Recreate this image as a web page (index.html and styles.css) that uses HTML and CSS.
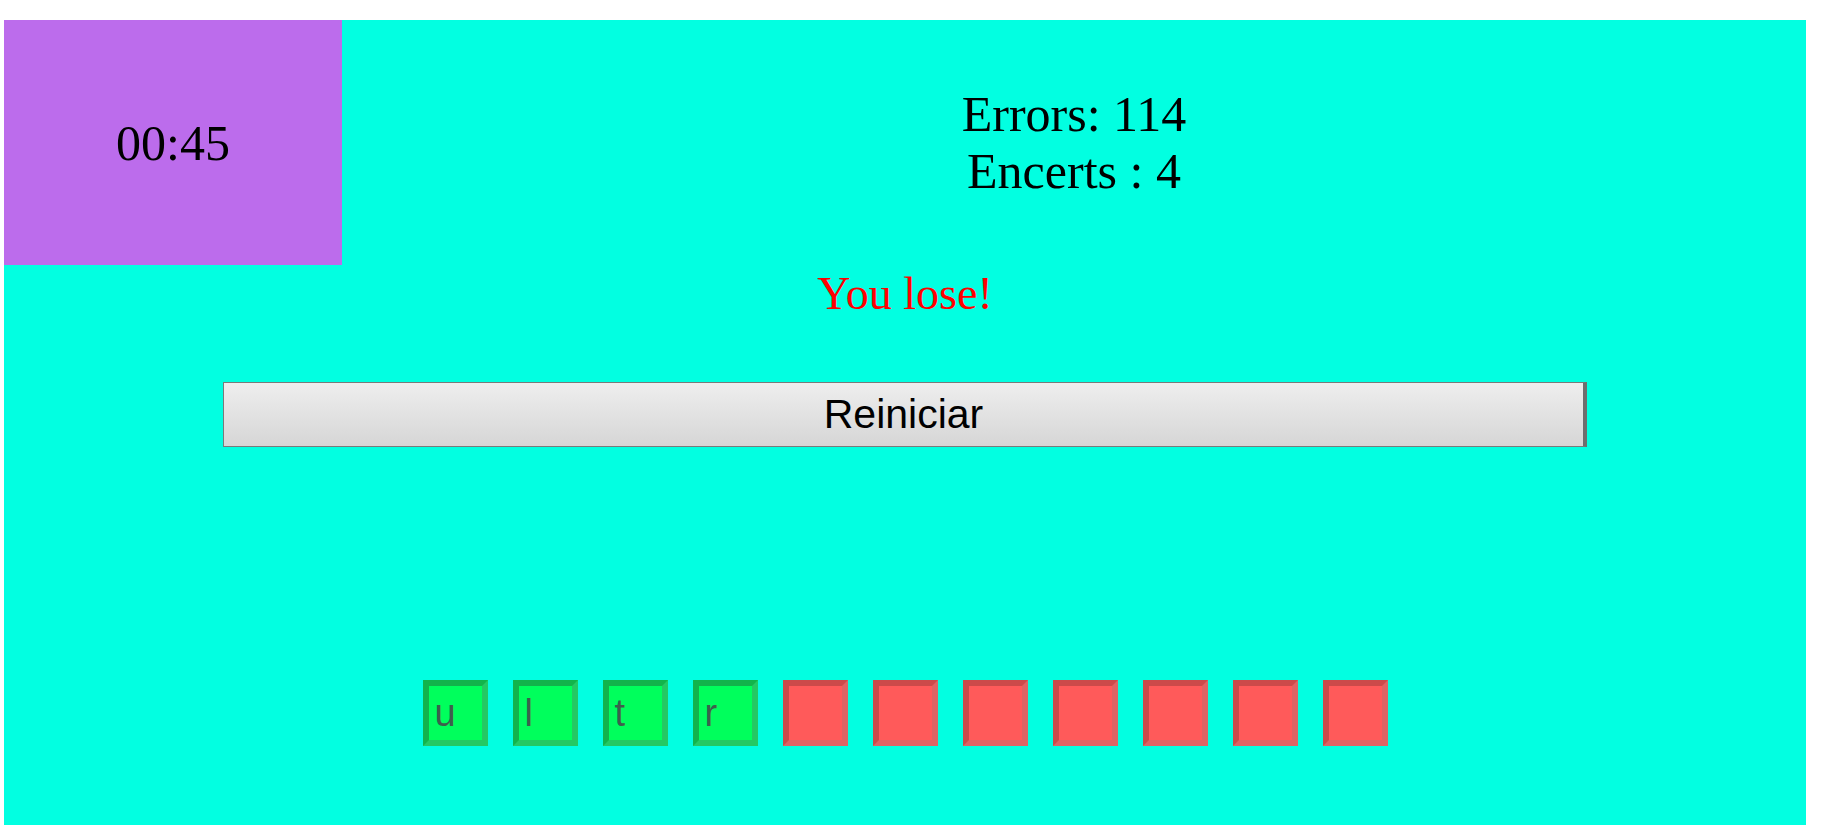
FILE: index.html
```html
<!DOCTYPE html>
<html lang="ca">
<head>
<meta charset="utf-8">
<title>Penjat</title>
<link rel="stylesheet" href="styles.css">
</head>
<body>
<div class="game">
  <div class="top">
    <div class="timer">00:45</div>
    <div class="score">
      <div>Errors: 114</div>
      <div>Encerts : 4</div>
    </div>
  </div>
  <div class="message">You lose!</div>
  <div class="actions">
    <button class="restart">Reiniciar</button>
  </div>
  <div class="word">
    <div class="tile hit">u</div>
    <div class="tile hit">l</div>
    <div class="tile hit">t</div>
    <div class="tile hit">r</div>
    <div class="tile miss"></div>
    <div class="tile miss"></div>
    <div class="tile miss"></div>
    <div class="tile miss"></div>
    <div class="tile miss"></div>
    <div class="tile miss"></div>
    <div class="tile miss"></div>
  </div>
</div>
</body>
</html>
```
FILE: styles.css
```css
html, body {
  height: 100%;
}
body {
  margin: 20px 16px 0 4px;
  background: #ffffff;
  font-family: "Liberation Serif", "Times New Roman", serif;
  overflow: hidden;
}
.game {
  background: #02ffe1;
  min-height: 805px;
  display: flex;
  flex-direction: column;
}
.top {
  display: flex;
  height: 245px;
}
.timer {
  width: 338px;
  background: #bc6cec;
  display: flex;
  align-items: center;
  justify-content: center;
  font-size: 50px;
  color: #000;
}
.score {
  flex: 1;
  display: flex;
  flex-direction: column;
  align-items: center;
  justify-content: center;
  font-size: 50px;
  line-height: 57px;
  color: #000;
}
.message {
  margin-top: 2px;
  text-align: center;
  color: #ff0000;
  font-size: 46px;
}
.actions {
  display: flex;
  justify-content: center;
  margin-top: 62px;
}
.restart {
  width: 1364px;
  height: 65px;
  box-sizing: border-box;
  border: 1px solid #7a7a7a;
  border-right: 4px solid #6e6e6e;
  background: linear-gradient(#eeeeee, #d6d6d6);
  font-family: "Liberation Sans", Arial, sans-serif;
  font-size: 41px;
  color: #000;
  padding: 0;
}
.word {
  display: flex;
  justify-content: center;
  gap: 25px;
  margin-top: 233px;
}
.tile {
  width: 65px;
  height: 66px;
  box-sizing: border-box;
  border: 6px solid;
  font-family: "Liberation Sans", Arial, sans-serif;
  font-size: 38px;
  line-height: 54px;
  padding-left: 6px;
  color: #3e5f4c;
}
.hit {
  background: #00ff5c;
  border-color: #12b44b #24c963 #24c963 #12b44b;
}
.miss {
  background: #ff5a5a;
  border-color: #cc4a4a #dd6464 #dd6464 #cc4a4a;
}
```
